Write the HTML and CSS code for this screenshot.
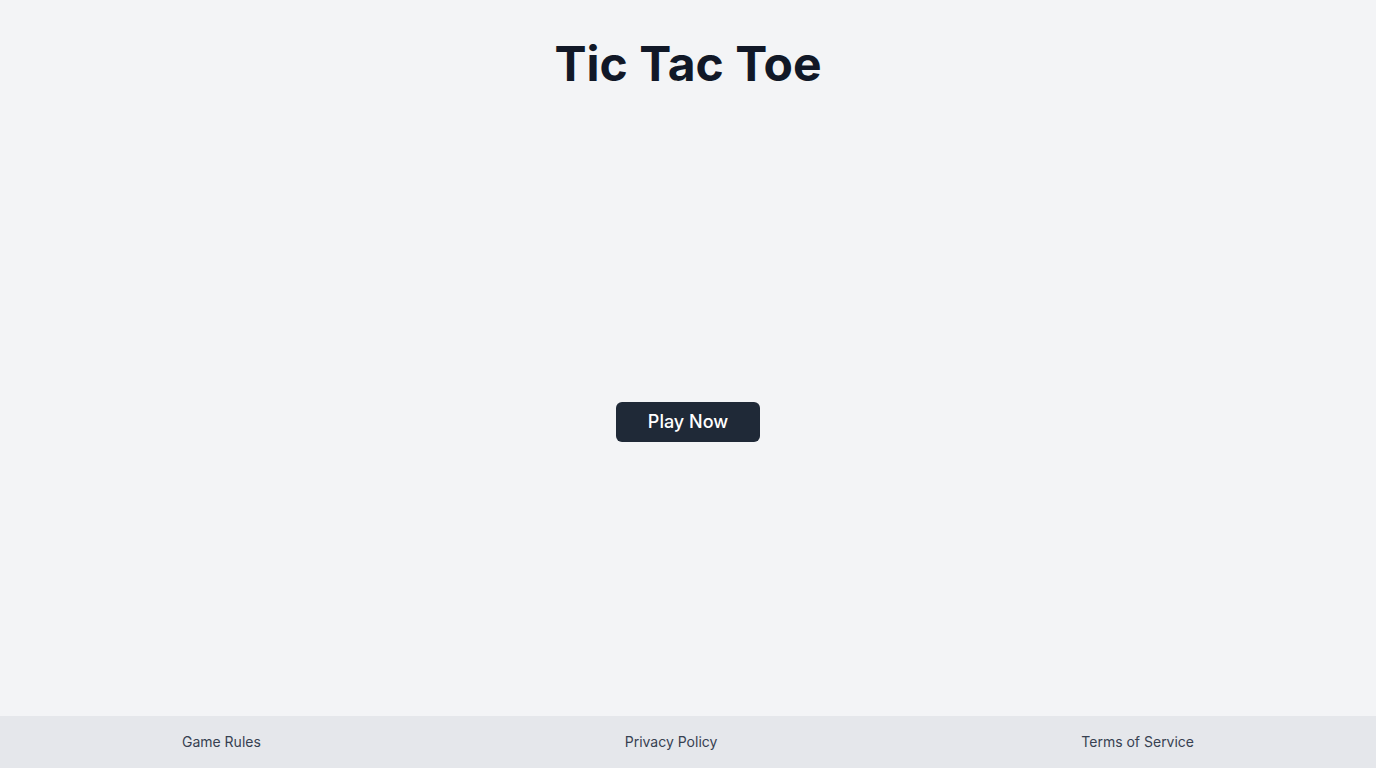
FILE: index.html
```html
<!DOCTYPE html>
<html lang="en">
<head>
<meta charset="utf-8">
<title>Tic Tac Toe</title>
<link rel="stylesheet" href="styles.css">
</head>
<body>
<div class="page">
  <header class="header">
    <h1 class="title">Tic Tac Toe</h1>
  </header>
  <main class="main">
    <button class="play-btn" type="button">Play Now</button>
  </main>
  <footer class="footer">
    <a class="footer-link" href="#">Game Rules</a>
    <a class="footer-link" href="#">Privacy Policy</a>
    <a class="footer-link" href="#">Terms of Service</a>
  </footer>
</div>
</body>
</html>
```

FILE: styles.css
```css
* { box-sizing: border-box; }
html, body {
  margin: 0;
  padding: 0;
  height: 100%;
}
body {
  font-family: Inter, "Liberation Sans", sans-serif;
  background: #f3f4f6;
  color: #111827;
}
.page {
  min-height: 100vh;
  display: flex;
  flex-direction: column;
}
.header {
  padding: 40px 16px;
  text-align: center;
}
.title {
  margin: 0;
  font-size: 48px;
  line-height: 48px;
  font-weight: 700;
  color: #111827;
}
.main {
  flex: 1;
  display: flex;
  align-items: center;
  justify-content: center;
}
.play-btn {
  font-family: inherit;
  font-size: 18px;
  line-height: 28px;
  font-weight: 500;
  padding: 6px 32px;
  background: #1f2937;
  color: #ffffff;
  border: none;
  border-radius: 6px;
  cursor: pointer;
}
.footer {
  background: #e5e7eb;
  padding: 16px 0;
  display: flex;
  justify-content: space-around;
}
.footer-link {
  font-size: 14px;
  line-height: 20px;
  color: #374151;
  text-decoration: none;
}
```
